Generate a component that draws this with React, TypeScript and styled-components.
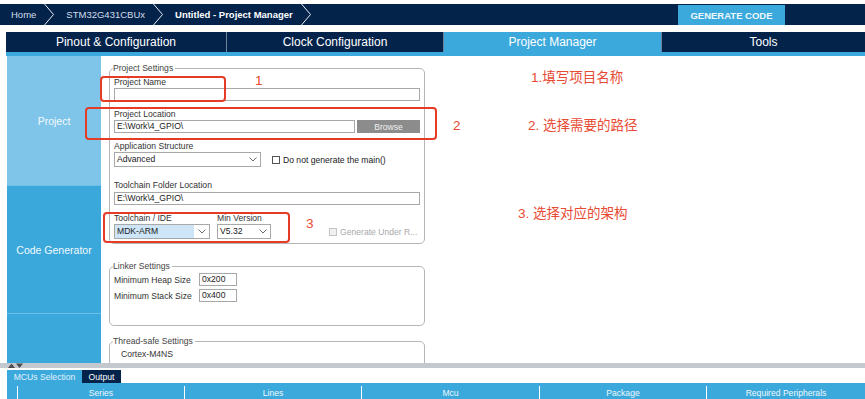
import React from 'react';
import styled, { createGlobalStyle } from 'styled-components';

const navy = '#03234b';
const blue = '#3ca9dc';
const red = '#e63b26';

const GlobalStyle = createGlobalStyle`
  html, body {
    margin: 0;
    padding: 0;
    background: #ffffff;
  }
  body {
    font-family: "Liberation Sans", Arial, sans-serif;
  }
  * {
    box-sizing: border-box;
  }
`;

const Screen = styled.div`
  width: 865px;
  height: 399px;
  overflow: hidden;
  display: flex;
  flex-direction: column;
  background: #ffffff;
`;

const TopBar = styled.div`
  margin-top: 4px;
  height: 21px;
  background: ${navy};
  display: flex;
  align-items: stretch;
`;

const Crumb = styled.div<{ $bold?: boolean; $first?: boolean }>`
  display: flex;
  align-items: center;
  padding: 0 8px 0 ${p => (p.$first ? 11 : 12)}px;
  font-size: 9.5px;
  font-weight: ${p => (p.$bold ? 'bold' : 'normal')};
  color: ${p => (p.$bold ? '#ffffff' : '#d5dde8')};
  white-space: nowrap;
`;

const GenerateButton = styled.div`
  margin: 1px 80px 0 auto;
  width: 107px;
  background: ${blue};
  color: #eef8fd;
  font-size: 9.5px;
  font-weight: bold;
  display: flex;
  align-items: center;
  justify-content: center;
`;

const TabRow = styled.div`
  margin: 7px 0 0 6px;
  height: 20px;
  display: flex;
`;

const Tab = styled.div<{ $active?: boolean; $width?: number }>`
  ${p => (p.$width ? `width: ${p.$width}px;` : 'flex: 1 1 auto;')}
  background: ${p => (p.$active ? blue : navy)};
  border-left: 1px solid #6f829b;
  &:first-child {
    border-left: none;
  }
  color: #ffffff;
  font-size: 12px;
  display: flex;
  align-items: center;
  justify-content: center;
`;

const Stripe = styled.div<{ $height: number; $left: number }>`
  margin-left: ${p => p.$left}px;
  height: ${p => p.$height}px;
  background: ${blue};
`;

const Main = styled.div`
  position: relative;
  height: 307px;
  display: flex;
  overflow: hidden;
`;

const Sidebar = styled.div`
  margin-left: 7px;
  width: 94px;
  display: flex;
  flex-direction: column;
`;

const SideItem = styled.div<{ $light?: boolean; $height?: number }>`
  ${p => (p.$height ? `height: ${p.$height}px;` : 'flex: 1 1 auto;')}
  background: ${p => (p.$light ? '#7ec5e9' : '#3aa8db')};
  border-top: ${p => (p.$light ? 'none' : '1px solid #70bfe6')};
  color: #f2f9fd;
  font-size: 10.5px;
  display: flex;
  align-items: center;
  justify-content: center;
`;

const FormColumn = styled.div`
  margin-left: 8px;
  width: 316px;
  padding-top: 7px;
  display: flex;
  flex-direction: column;
  flex-shrink: 0;
`;

const Group = styled.fieldset<{ $top?: number; $pt: number; $pb: number }>`
  margin: ${p => p.$top ?? 0}px 0 0 0;
  padding: ${p => p.$pt}px 4px ${p => p.$pb}px 4px;
  border: 1px solid #b6b6b6;
  border-radius: 5px;
  min-width: 0;
`;

const Legend = styled.legend`
  margin-left: -1px;
  padding: 0 2px 0 0;
  font-size: 8.6px;
  line-height: 10px;
  color: #444444;
`;

const Field = styled.div<{ $top?: number; $gap?: number }>`
  display: flex;
  flex-direction: column;
  gap: ${p => p.$gap ?? 1}px;
  margin-top: ${p => p.$top ?? 0}px;
`;

const Label = styled.div<{ $width?: number }>`
  font-size: 8.6px;
  line-height: 10px;
  color: #333333;
  white-space: nowrap;
  ${p => (p.$width ? `width: ${p.$width}px;` : '')}
`;

const TextBox = styled.div<{ $width?: number }>`
  height: 13px;
  ${p => (p.$width ? `width: ${p.$width}px;` : 'flex: 1 1 auto;')}
  border: 1px solid #a8a8a8;
  background: #ffffff;
  padding-left: 2px;
  font-size: 8.6px;
  line-height: 11px;
  color: #222222;
  white-space: nowrap;
  overflow: hidden;
`;

const InputRow = styled.div`
  display: flex;
  align-items: stretch;
  gap: 2px;
`;

const BrowseButton = styled.div`
  width: 63px;
  height: 13px;
  background: #8c8c8c;
  color: #f0f0f0;
  font-size: 8.6px;
  display: flex;
  align-items: center;
  justify-content: center;
`;

const Select = styled.div<{ $width: number }>`
  width: ${p => p.$width}px;
  height: 15px;
  border: 1px solid #a8a8a8;
  background: #ffffff;
  display: flex;
`;

const SelectValue = styled.div<{ $highlight?: boolean }>`
  flex: 1 1 auto;
  padding-left: 2px;
  background: ${p => (p.$highlight ? '#cde5f7' : 'transparent')};
  font-size: 8.6px;
  line-height: 13px;
  color: #222222;
`;

const SelectArrow = styled.div`
  width: 15px;
  display: flex;
  align-items: center;
  justify-content: center;
`;

const CheckRow = styled.div<{ $left: number; $disabled?: boolean }>`
  margin-left: ${p => p.$left}px;
  height: 15px;
  display: flex;
  align-items: center;
  gap: 3px;
  font-size: 8.6px;
  color: ${p => (p.$disabled ? '#a9a9a9' : '#222222')};
  white-space: nowrap;
`;

const CheckBox = styled.div<{ $disabled?: boolean }>`
  width: 8px;
  height: 8px;
  border: 1px solid ${p => (p.$disabled ? '#c4c4c4' : '#555555')};
  background: ${p => (p.$disabled ? '#f0f0f0' : '#ffffff')};
`;

const Row = styled.div<{ $align?: string; $gap?: number }>`
  display: flex;
  align-items: ${p => p.$align ?? 'center'};
  gap: ${p => p.$gap ?? 0}px;
`;

const PlainText = styled.div`
  padding-left: 7px;
  font-size: 8.6px;
  line-height: 10px;
  color: #333333;
`;

const Notes = styled.div`
  margin-left: 93px;
  padding-top: 14px;
  display: flex;
  flex-direction: column;
`;

const Note = styled.div<{ $top: number; $indent: number }>`
  margin-top: ${p => p.$top}px;
  padding-left: ${p => p.$indent}px;
  font-family: "Liberation Sans", "Noto Sans CJK SC", sans-serif;
  font-size: 13.5px;
  line-height: 16px;
  color: #e84a33;
  white-space: nowrap;
`;

const MarkBox = styled.div`
  position: absolute;
  border: 2px solid ${red};
  border-radius: 4px;
  pointer-events: none;
`;

const MarkNumber = styled.div`
  position: absolute;
  font-size: 13.5px;
  line-height: 16px;
  color: #e84a33;
`;

const Splitter = styled.div`
  height: 5px;
  background: #c3c9cf;
  display: flex;
  align-items: center;
  padding-left: 8px;
`;

const BottomTabs = styled.div`
  margin: 2px 0 0 7px;
  height: 13px;
  display: flex;
`;

const BottomTab = styled.div<{ $active?: boolean; $width: number }>`
  width: ${p => p.$width}px;
  background: ${p => (p.$active ? blue : navy)};
  color: ${p => (p.$active ? '#e2f2fb' : '#ffffff')};
  font-size: 8.6px;
  display: flex;
  align-items: center;
  justify-content: center;
`;

const HeaderRow = styled.div`
  margin-left: 7px;
  height: 13px;
  display: flex;
  gap: 1px;
  background: #ffffff;
`;

const HeaderCell = styled.div<{ $width?: number }>`
  ${p => (p.$width ? `width: ${p.$width}px;` : 'flex: 1 1 auto;')}
  background: ${blue};
  color: #eef8fd;
  font-size: 8.6px;
  display: flex;
  align-items: center;
  justify-content: center;
`;

const Chevron = () => (
  <svg width="10" height="21" viewBox="0 0 10 21">
    <polyline points="0.5,0 9.5,10.5 0.5,21" fill="none" stroke="#e6ebf2" strokeWidth="1" />
  </svg>
);

const DownArrow = () => (
  <svg width="8" height="5" viewBox="0 0 8 5">
    <polyline points="0.5,0.5 4,4 7.5,0.5" fill="none" stroke="#6a6a6a" strokeWidth="1" />
  </svg>
);

const SplitArrows = () => (
  <svg width="15" height="5" viewBox="0 0 15 5">
    <polygon points="0,5 3.5,0.5 7,5" fill="#4d4d4d" />
    <polygon points="8,0.5 15,0.5 11.5,5" fill="#4d4d4d" />
  </svg>
);

const Dropdown = ({ width, value, highlight }: { width: number; value: string; highlight?: boolean }) => (
  <Select $width={width}>
    <SelectValue $highlight={highlight}>{value}</SelectValue>
    <SelectArrow>
      <DownArrow />
    </SelectArrow>
  </Select>
);

const columns = [
  { name: '', width: 10 },
  { name: 'Series', width: 166 },
  { name: 'Lines', width: 176 },
  { name: 'Mcu', width: 177 },
  { name: 'Package', width: 166 },
  { name: 'Required Peripherals' },
];

const App: React.FC = () => {
  return (
    <Screen>
      <GlobalStyle />
      <TopBar>
        <Crumb $first>Home</Crumb>
        <Chevron />
        <Crumb>STM32G431CBUx</Crumb>
        <Chevron />
        <Crumb $bold>Untitled - Project Manager</Crumb>
        <Chevron />
        <GenerateButton>GENERATE CODE</GenerateButton>
      </TopBar>

      <TabRow>
        <Tab $width={220}>Pinout &amp; Configuration</Tab>
        <Tab $width={217}>Clock Configuration</Tab>
        <Tab $width={218} $active>Project Manager</Tab>
        <Tab>Tools</Tab>
      </TabRow>
      <Stripe $height={4} $left={6} />

      <Main>
        <Sidebar>
          <SideItem $light $height={129}>Project</SideItem>
          <SideItem $height={128}>Code Generator</SideItem>
          <SideItem />
        </Sidebar>

        <FormColumn>
          <Group $pt={4} $pb={4}>
            <Legend>Project Settings</Legend>
            <Field>
              <Label>Project Name</Label>
              <TextBox />
            </Field>
            <Field $top={8}>
              <Label>Project Location</Label>
              <InputRow>
                <TextBox>E:\Work\4_GPIO\</TextBox>
                <BrowseButton>Browse</BrowseButton>
              </InputRow>
            </Field>
            <Field $top={8}>
              <Label>Application Structure</Label>
              <Row>
                <Dropdown width={147} value="Advanced" />
                <CheckRow $left={11}>
                  <CheckBox />
                  Do not generate the main()
                </CheckRow>
              </Row>
            </Field>
            <Field $top={13} $gap={2}>
              <Label>Toolchain Folder Location</Label>
              <TextBox>E:\Work\4_GPIO\</TextBox>
            </Field>
            <Row $align="flex-end" $gap={7}>
              <Field $top={8}>
                <Label>Toolchain / IDE</Label>
                <Dropdown width={96} value="MDK-ARM" highlight />
              </Field>
              <Field $top={8}>
                <Label>Min Version</Label>
                <Dropdown width={54} value="V5.32" />
              </Field>
              <CheckRow $left={51} $disabled>
                <CheckBox $disabled />
                Generate Under R...
              </CheckRow>
            </Row>
          </Group>

          <Group $top={17} $pt={2} $pb={23}>
            <Legend>Linker Settings</Legend>
            <Field $gap={3}>
              <Row>
                <Label $width={85}>Minimum Heap Size</Label>
                <TextBox $width={38}>0x200</TextBox>
              </Row>
              <Row>
                <Label $width={85}>Minimum Stack Size</Label>
                <TextBox $width={38}>0x400</TextBox>
              </Row>
            </Field>
          </Group>

          <Group $top={10} $pt={3} $pb={30}>
            <Legend>Thread-safe Settings</Legend>
            <PlainText>Cortex-M4NS</PlainText>
          </Group>
        </FormColumn>

        <Notes>
          <Note $top={0} $indent={13}>1.填写项目名称</Note>
          <Note $top={32} $indent={10}>2. 选择需要的路径</Note>
          <Note $top={72} $indent={0}>3. 选择对应的架构</Note>
        </Notes>

        <MarkBox style={{ left: 100, top: 20, width: 126, height: 26 }} />
        <MarkBox style={{ left: 85, top: 51, width: 352, height: 33 }} />
        <MarkBox style={{ left: 103, top: 156, width: 187, height: 31 }} />
        <MarkNumber style={{ left: 255, top: 17 }}>1</MarkNumber>
        <MarkNumber style={{ left: 453, top: 62 }}>2</MarkNumber>
        <MarkNumber style={{ left: 306, top: 160 }}>3</MarkNumber>
      </Main>

      <Splitter>
        <SplitArrows />
      </Splitter>

      <BottomTabs>
        <BottomTab $active $width={75}>MCUs Selection</BottomTab>
        <BottomTab $width={39}>Output</BottomTab>
      </BottomTabs>
      <Stripe $height={3} $left={7} />
      <HeaderRow>
        {columns.map(c => (
          <HeaderCell key={c.name || 'first'} $width={c.width}>{c.name}</HeaderCell>
        ))}
      </HeaderRow>
    </Screen>
  );
};

export default App;
